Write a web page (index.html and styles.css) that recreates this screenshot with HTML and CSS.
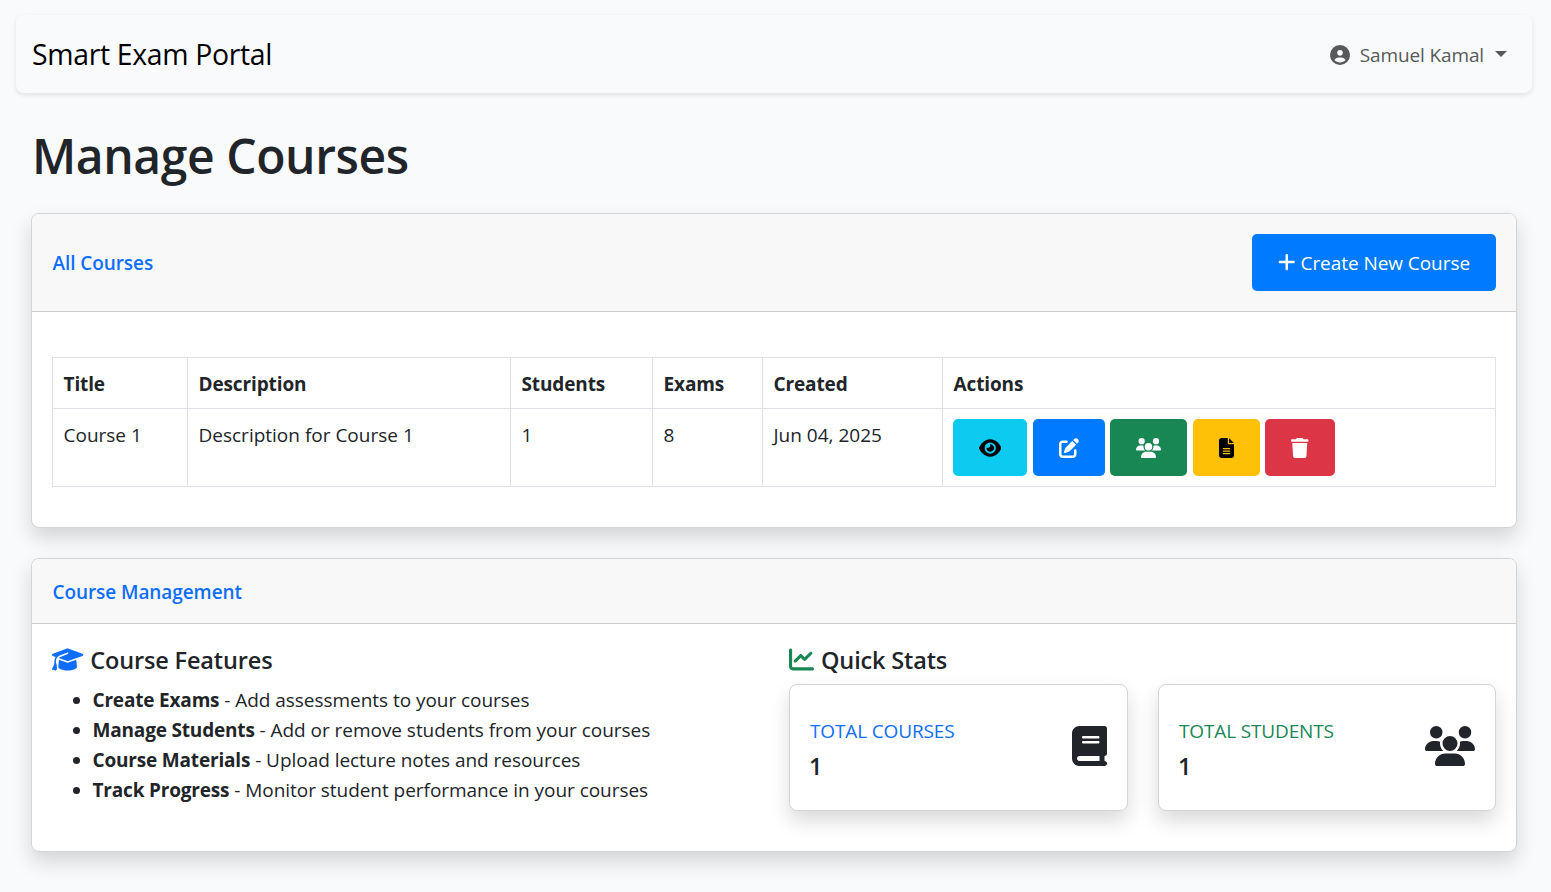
FILE: index.html
```html
<!DOCTYPE html>
<html lang="en">
<head>
<meta charset="utf-8">
<title>Manage Courses</title>
<link rel="stylesheet" href="styles.css">
</head>
<body>
<svg class="sprite" aria-hidden="true">
  <symbol id="users" viewBox="0 0 640 512"><path d="M144 0a80 80 0 1 1 0 160A80 80 0 1 1 144 0zM512 0a80 80 0 1 1 0 160A80 80 0 1 1 512 0zM0 298.7C0 239.8 47.8 192 106.7 192h42.7c15.9 0 31 3.5 44.6 9.7c-1.3 7.2-1.9 14.7-1.9 22.3c0 38.2 16.8 72.5 43.3 96c-.2 0-.4 0-.7 0H21.3C9.6 320 0 310.4 0 298.7zM405.3 320c-.2 0-.4 0-.7 0c26.6-23.5 43.3-57.8 43.3-96c0-7.6-.7-15-1.9-22.3c13.6-6.3 28.7-9.7 44.6-9.7h42.7C592.2 192 640 239.8 640 298.7c0 11.8-9.6 21.3-21.3 21.3H405.3zM224 224a96 96 0 1 1 192 0 96 96 0 1 1 -192 0zM128 485.3C128 411.7 187.7 352 261.3 352H378.7C452.3 352 512 411.7 512 485.3c0 14.7-11.9 26.7-26.7 26.7H154.7c-14.7 0-26.7-11.9-26.7-26.7z"/></symbol>
</svg>
<nav class="navbar">
  <a class="brand">Smart Exam Portal</a>
  <div class="user">
    <svg class="icon user-icon" viewBox="0 0 512 512"><path d="M399 384.2C376.9 345.8 335.4 320 288 320H224c-47.4 0-88.9 25.8-111 64.2c35.2 39.2 86.2 63.8 143 63.8s107.8-24.7 143-63.8zM0 256a256 256 0 1 1 512 0A256 256 0 1 1 0 256zm256 16a72 72 0 1 0 0-144 72 72 0 1 0 0 144z"/></svg>
    <span class="user-name">Samuel Kamal</span>
    <span class="caret"></span>
  </div>
</nav>
<main class="content">
  <h1 class="page-title">Manage Courses</h1>

  <section class="card courses">
    <header class="card-header courses-header">
      <h6 class="card-title all-title">All Courses</h6>
      <a class="btn create">
        <svg class="icon" viewBox="0 0 448 512"><path d="M256 80c0-17.7-14.3-32-32-32s-32 14.3-32 32V224H48c-17.7 0-32 14.3-32 32s14.3 32 32 32H192V432c0 17.7 14.3 32 32 32s32-14.3 32-32V288H400c17.7 0 32-14.3 32-32s-14.3-32-32-32H256V80z"/></svg>
        <span>Create New Course</span>
      </a>
    </header>
    <div class="courses-body">
      <table class="table">
        <colgroup><col class="c-title"><col class="c-desc"><col class="c-students"><col class="c-exams"><col class="c-created"><col></colgroup>
        <thead><tr><th>Title</th><th>Description</th><th>Students</th><th>Exams</th><th>Created</th><th>Actions</th></tr></thead>
        <tbody><tr>
          <td>Course 1</td><td>Description for Course 1</td><td>1</td><td>8</td><td>Jun 04, 2025</td>
          <td class="action-cell"><div class="actions">
            <a class="btn info"><svg class="icon" viewBox="0 0 576 512"><path d="M288 32c-80.8 0-145.5 36.8-192.6 80.6C48.6 156 17.3 208 2.5 243.7c-3.3 7.9-3.3 16.7 0 24.6C17.3 304 48.6 356 95.4 399.4C142.5 443.2 207.2 480 288 480s145.5-36.8 192.6-80.6c46.8-43.5 78.1-95.4 93-131.1c3.3-7.9 3.3-16.7 0-24.6c-14.9-35.7-46.2-87.7-93-131.1C433.5 68.8 368.8 32 288 32zM144 256a144 144 0 1 1 288 0 144 144 0 1 1 -288 0zm144-64c0 35.3-28.7 64-64 64c-7.1 0-13.9-1.2-20.3-3.3c-5.5-1.8-11.9 1.6-11.7 7.4c.3 6.9 1.3 13.8 3.2 20.7c13.7 51.2 66.4 81.6 117.6 67.9s81.6-66.4 67.9-117.6c-11.1-41.5-47.8-69.4-88.6-71.1c-5.8-.2-9.2 6.1-7.4 11.7c2.1 6.4 3.3 13.2 3.3 20.3z"/></svg></a>
            <a class="btn primary"><svg class="icon" viewBox="0 0 512 512"><path d="M471.6 21.7c-21.9-21.9-57.3-21.9-79.2 0L362.3 51.7l97.9 97.9 30.1-30.1c21.9-21.9 21.9-57.3 0-79.2L471.6 21.7zm-299.2 220c-6.1 6.1-10.8 13.6-13.5 21.9l-29.6 88.8c-2.9 8.6-.6 18.1 5.8 24.6s15.9 8.7 24.6 5.8l88.8-29.6c8.2-2.7 15.7-7.4 21.9-13.5L437.7 172.3 339.7 74.3 172.4 241.7zM96 64C43 64 0 107 0 160V416c0 53 43 96 96 96H352c53 0 96-43 96-96V320c0-17.7-14.3-32-32-32s-32 14.3-32 32v96c0 17.7-14.3 32-32 32H96c-17.7 0-32-14.3-32-32V160c0-17.7 14.3-32 32-32h96c17.7 0 32-14.3 32-32s-14.3-32-32-32H96z"/></svg></a>
            <a class="btn success"><svg class="icon"><use href="#users"/></svg></a>
            <a class="btn warning"><svg class="icon" viewBox="0 0 384 512"><path d="M64 0C28.7 0 0 28.7 0 64V448c0 35.3 28.7 64 64 64H320c35.3 0 64-28.7 64-64V160H256c-17.7 0-32-14.3-32-32V0H64zM256 0V128H384L256 0zM112 256H272c8.8 0 16 7.2 16 16s-7.2 16-16 16H112c-8.8 0-16-7.2-16-16s7.2-16 16-16zm0 64H272c8.8 0 16 7.2 16 16s-7.2 16-16 16H112c-8.8 0-16-7.2-16-16s7.2-16 16-16zm0 64H272c8.8 0 16 7.2 16 16s-7.2 16-16 16H112c-8.8 0-16-7.2-16-16s7.2-16 16-16z" fill-rule="evenodd"/></svg></a>
            <a class="btn danger"><svg class="icon" viewBox="0 0 448 512"><path d="M135.2 17.7L128 32H32C14.3 32 0 46.3 0 64S14.3 96 32 96H416c17.7 0 32-14.3 32-32s-14.3-32-32-32H320l-7.2-14.3C307.4 6.8 296.3 0 284.2 0H163.8c-12.1 0-23.2 6.8-28.6 17.7zM416 128H32L53.2 467c1.6 25.3 22.6 45 47.9 45H346.9c25.3 0 46.3-19.7 47.9-45L416 128z"/></svg></a>
          </div></td>
        </tr></tbody>
      </table>
    </div>
  </section>

  <section class="card management">
    <header class="card-header"><h6 class="card-title mgmt-title">Course Management</h6></header>
    <div class="management-body">
      <div>
        <h5 class="subtitle"><svg class="icon cap" viewBox="0 0 640 512"><path d="M320 32c-8.1 0-16.1 1.4-23.7 4.1L15.8 137.4C6.3 140.9 0 149.9 0 160s6.3 19.1 15.8 22.6l57.9 20.9C57.3 229.3 48 259.8 48 291.9v28.1c0 28.4-10.8 57.7-22.3 80.8c-6.5 13-13.9 25.8-22.5 37.6C0 442.7-.9 448.3 .9 453.4s6 8.9 11.2 10.2l64 16c4.2 1.1 8.7 .3 12.4-2s6.3-6.1 7.1-10.4c8.6-42.8 4.3-81.2-2.1-108.7C90.3 344.3 86 329.8 80 316.5V291.9c0-30.2 10.2-58.7 27.9-81.5c12.9-15.5 29.6-28 49.2-35.7l157-61.7c8.2-3.2 17.5 .8 20.7 9s-.8 17.5-9 20.7l-157 61.7c-12.4 4.9-23.3 12.4-32.2 21.6l159.6 57.6c7.6 2.7 15.6 4.1 23.7 4.1s16.1-1.4 23.7-4.1L624.2 182.6c9.5-3.4 15.8-12.5 15.8-22.6s-6.3-19.1-15.8-22.6L343.7 36.1C336.1 33.4 328.1 32 320 32zM128 408c0 35.3 86 72 192 72s192-36.7 192-72L496.7 262.6 354.5 314c-11.1 4-22.8 6-34.5 6s-23.5-2-34.5-6L143.3 262.6 128 408z"/></svg><span>Course Features</span></h5>
        <ul class="features">
          <li><strong>Create Exams</strong> - Add assessments to your courses</li>
          <li><strong>Manage Students</strong> - Add or remove students from your courses</li>
          <li><strong>Course Materials</strong> - Upload lecture notes and resources</li>
          <li><strong>Track Progress</strong> - Monitor student performance in your courses</li>
        </ul>
      </div>
      <div>
        <h5 class="subtitle"><svg class="icon chart" viewBox="0 0 512 512"><path d="M64 64c0-17.7-14.3-32-32-32S0 46.3 0 64V400c0 44.2 35.8 80 80 80H480c17.7 0 32-14.3 32-32s-14.3-32-32-32H80c-8.8 0-16-7.2-16-16V64zm406.6 86.6c12.5-12.5 12.5-32.8 0-45.3s-32.8-12.5-45.3 0L320 210.7l-57.4-57.4c-12.5-12.5-32.8-12.5-45.3 0l-112 112c-12.5 12.5-12.5 32.8 0 45.3s32.8 12.5 45.3 0L240 221.3l57.4 57.4c12.5 12.5 32.8 12.5 45.3 0l128-128z"/></svg><span>Quick Stats</span></h5>
        <div class="stats">
          <div class="card stat">
            <div><div class="stat-label blue">TOTAL COURSES</div><div class="stat-value">1</div></div>
            <svg class="icon stat-icon book" viewBox="0 0 448 512"><path d="M96 0C43 0 0 43 0 96V416c0 53 43 96 96 96H384h32c17.7 0 32-14.3 32-32s-14.3-32-32-32V384c17.7 0 32-14.3 32-32V32c0-17.7-14.3-32-32-32H384 96zm0 384H352v64H96c-17.7 0-32-14.3-32-32s14.3-32 32-32zm32-240c0-8.8 7.2-16 16-16H336c8.8 0 16 7.2 16 16s-7.2 16-16 16H144c-8.8 0-16-7.2-16-16zm16 48H336c8.8 0 16 7.2 16 16s-7.2 16-16 16H144c-8.8 0-16-7.2-16-16s7.2-16 16-16z"/></svg>
          </div>
          <div class="card stat">
            <div><div class="stat-label green">TOTAL STUDENTS</div><div class="stat-value">1</div></div>
            <svg class="icon stat-icon people"><use href="#users"/></svg>
          </div>
        </div>
      </div>
    </div>
  </section>
</main>
</body>
</html>
```
FILE: styles.css
```css
* { box-sizing: border-box; }
html { background: #f8fafc; }
body {
  display: flow-root;
  min-height: 100vh;
  margin: 0;
  color: #212529;
  font: 400 19px/30px "Open Sans", "Noto Sans", sans-serif;
}
h1, h5, h6, ul { margin: 0; padding: 0; }
.sprite { display: none; }
.icon { display: block; flex: none; height: 20px; fill: currentColor; }

.navbar {
  display: flex; align-items: center; justify-content: space-between;
  height: 78px; margin: 15px 19px 0 16px; padding: 0 25px 0 16px;
  background: #f8fafc; border-radius: 8px;
  box-shadow: 0 2px 5px rgba(0, 0, 0, .1);
}
.brand { color: #000; font-size: 28.4px; letter-spacing: -.33px; }
.user { display: flex; align-items: center; color: #58595b; padding-top: 1px; }
.user-icon { width: 20px; margin-right: 10px; }
.user-name { letter-spacing: -.13px; padding-top: 1px; }
.caret { margin-left: 11px; margin-top: -2px; border: 6px solid transparent; border-top-color: currentColor; border-bottom: 0; }

.content { padding: 0 34px 0 31px; }
.page-title { padding: 33px 0 0 1px; height: 120px; font-size: 48px; line-height: 60px; font-weight: 600; letter-spacing: -.42px; }

.card {
  background: #fff; border: 1px solid #d3d4d5; border-radius: 8px;
  box-shadow: 0 10px 20px rgba(0, 0, 0, .15);
}
.card-header {
  display: flex; align-items: center; justify-content: space-between;
  height: 65px; padding: 0 20px;
  background: #f8f8f8; border-bottom: 1px solid #cbcccd; border-radius: 7px 7px 0 0;
}
.card-title { padding-left: .5px; color: #0d6efd; font-size: 19px; line-height: 24px; font-weight: 600; letter-spacing: -.08px; }
.mgmt-title { padding-top: 2px; }
.courses { height: 315px; }
.courses-header { height: 98px; }
.courses-body { padding: 45px 20px 0; }

.btn { display: flex; align-items: center; justify-content: center; height: 57px; border-radius: 5px; color: #fff; }
.create { width: 244px; gap: 5px; background: #007bff; letter-spacing: -.06px; }
.create .icon { width: 17.5px; margin-top: -1px; }

.table { width: 1444px; table-layout: fixed; border-collapse: collapse; }
.table th, .table td { border: 1px solid #dee2e6; padding: 11px 10px 9px 10.5px; text-align: left; vertical-align: top; }
.table th { letter-spacing: -.12px; }
.table .action-cell { padding: 10px; }
.c-title { width: 135px; }
.c-desc { width: 323px; }
.c-students { width: 142px; }
.c-exams { width: 110px; }
.c-created { width: 180px; }
.actions { display: flex; }
.info { width: 74px; margin-right: 6px; background: #0dcaf0; color: #000; }
.info .icon { width: 22.5px; }
.primary { width: 72px; margin-right: 5px; background: #007bff; }
.primary .icon { width: 20px; }
.success { width: 77px; margin-right: 6px; background: #198754; }
.success .icon { width: 25px; }
.warning { width: 67px; margin-right: 5px; background: #ffc107; color: #000; }
.warning .icon { width: 15px; }
.danger { width: 70px; background: #dc3545; }
.danger .icon { width: 17.5px; }

.management { height: 294px; margin-top: 30px; }
.management-body { display: grid; grid-template-columns: 707px 707px; column-gap: 30px; padding: 21px 20px 0; }
.subtitle { display: flex; align-items: center; gap: 7px; height: 30px; margin-bottom: 9px; font-size: 23.5px; font-weight: 600; letter-spacing: -.15px; }
.subtitle .icon { margin-top: -1px; }
.cap { width: 31.25px; height: 25px; color: #0d6efd; }
.chart { width: 25px; height: 25px; color: #198754; }
.features { padding: 1px 0 0 40.5px; letter-spacing: -.04px; }
.features strong { letter-spacing: -.18px; }
.stats { display: grid; grid-template-columns: 339px 338px; gap: 30px; }
.stat { display: flex; align-items: center; justify-content: space-between; height: 127px; padding: 2px 20px 0; }
.stat-label { line-height: 24px; margin-bottom: 8px; padding-top: 2px; letter-spacing: -.14px; }
.blue { color: #0d6efd; }
.green { color: #198754; }
.stat-value { margin-left: -1px; font-size: 23.5px; line-height: 30px; font-weight: 600; }
.stat-icon { height: 40px; margin-top: -5px; }
.book { width: 35px; }
.people { width: 50px; }
```
